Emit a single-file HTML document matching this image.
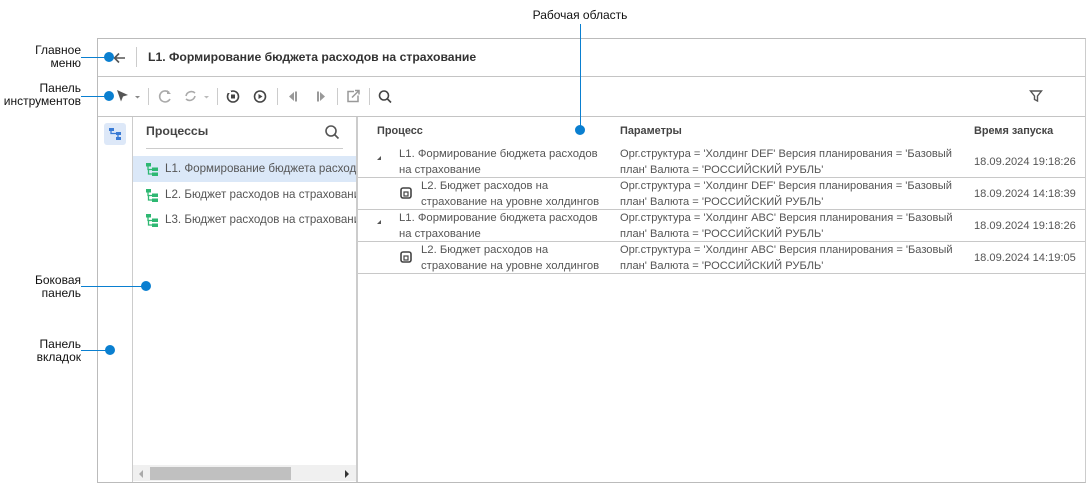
<!DOCTYPE html>
<html><head><meta charset="utf-8"><style>
*{margin:0;padding:0;box-sizing:border-box}
body{width:1092px;height:486px;background:#fff;font-family:"Liberation Sans",Arial,sans-serif;position:relative;overflow:hidden;color:#333}
.a{position:absolute}
.lbl{position:absolute;font-size:12px;color:#111;text-align:right;line-height:13px}
.dot{position:absolute;width:10px;height:10px;border-radius:5px;background:#0a7fd0}
.ln{position:absolute;background:#0a7fd0}
.t{position:absolute;font-size:11.3px;color:#555;line-height:16px;white-space:nowrap}
.h{position:absolute;font-size:10.9px;font-weight:bold;color:#444}
.row{position:absolute;left:358px;width:727px;height:1px;background:#c8c8c8}
.sep{position:absolute;top:88px;width:1px;height:17px;background:#ccc}
</style></head><body>
<div class="a" style="left:97px;top:38px;width:989px;height:445px;border:1px solid #bbb;border-right:1px solid #ccc"></div>
<div class="a" style="left:98px;top:76px;width:987px;height:1px;background:#c4c4c4"></div>
<div class="a" style="left:98px;top:116px;width:987px;height:1px;background:#c4c4c4"></div>
<div class="a" style="left:132px;top:117px;width:1px;height:365px;background:#ccc"></div>
<div class="a" style="left:356px;top:117px;width:2px;height:365px;background:#ccc"></div>
<div class="a" style="left:136px;top:47px;width:1px;height:20px;background:#ccc"></div>
<svg class="a" style="left:113px;top:51px" width="14" height="14" viewBox="0 0 14 14"><path d="M12 7H2M6 2.5L1.5 7 6 11.5" stroke="#555" stroke-width="1.6" fill="none"/></svg>
<div class="a" style="left:148px;top:50px;font-size:12.2px;font-weight:bold;color:#333">L1. Формирование бюджета расходов на страхование</div>
<svg class="a" style="left:114px;top:88px" width="290" height="17" viewBox="0 0 290 17">
<path d="M3 2l11 5-5 1.5-2 5z" fill="#555"/><path d="M21 8l2.5 2.5L26 8z" fill="#888"/>
<g stroke="#aaa" stroke-width="1.6" fill="none"><path d="M55 4.5A5.5 5.5 0 1 0 56 11"/><path d="M81 5a5.5 5.5 0 0 0-9 3M72 11a5.5 5.5 0 0 0 9-3"/></g>
<path d="M53 2v4h4z" fill="#aaa"/><path d="M90 8l2.5 2.5L95 8z" fill="#bbb"/>
<g stroke="#444" stroke-width="1.6" fill="none"><circle cx="119" cy="8.5" r="5.5"/><circle cx="146" cy="8.5" r="5.5"/></g>
<rect x="117" y="6.5" width="4" height="4" fill="#444"/><path d="M144.5 6v5l4-2.5z" fill="#444"/>
<path d="M114 3h3v2h-3z M140 3h-3v2h3z" fill="#fff"/>
<g fill="#999"><path d="M175 8.5l5-4.5v9z"/><rect x="181" y="3.5" width="2" height="10"/><rect x="203" y="3.5" width="2" height="10"/><path d="M206 4v9l5-4.5z"/></g>
<g stroke="#999" stroke-width="1.5" fill="none"><path d="M240 3.5h-6v10h10v-6"/><path d="M238 9.5l7-7M241 2.5h4v4"/></g>
<g stroke="#444" stroke-width="1.6" fill="none"><circle cx="270" cy="7.5" r="4.5"/><path d="M273.5 11l3.5 3.5"/></g>
</svg>
<div class="sep" style="left:148px"></div><div class="sep" style="left:217px"></div><div class="sep" style="left:277px"></div><div class="sep" style="left:337px"></div><div class="sep" style="left:369px"></div>
<svg class="a" style="left:1029px;top:89px" width="14" height="14" viewBox="0 0 14 14"><path d="M1.5 2h11l-4 5v5l-3-1.5V7z" stroke="#555" stroke-width="1.4" fill="none"/></svg>
<div class="a" style="left:104px;top:123px;width:22px;height:22px;background:#dde8f8;border-radius:3px"></div>
<svg class="a" style="left:108px;top:127px" width="14" height="14" viewBox="0 0 14 14"><g fill="#3a7bd5"><rect x="1" y="1" width="5" height="3"/><rect x="8" y="5" width="5" height="3"/><rect x="8" y="10" width="5" height="3"/></g><path d="M3 4v2.5h5M10 8v2" stroke="#3a7bd5" stroke-width="1.3" fill="none"/></svg>
<div class="a" style="left:146px;top:124px;font-size:12.3px;font-weight:bold;color:#444">Процессы</div>
<svg class="a" style="left:324px;top:124px" width="16" height="16" viewBox="0 0 16 16"><g stroke="#555" stroke-width="1.6" fill="none"><circle cx="7" cy="7" r="5"/><path d="M10.5 10.5l4 4"/></g></svg>
<div class="a" style="left:146px;top:148px;width:197px;height:1px;background:#ccc"></div>
<div class="a" style="left:133px;top:156px;width:223px;height:26px;background:#dbe8f8"></div>
<svg width="0" height="0" style="position:absolute"><defs><g id="pi"><g fill="#2eb872"><rect x="0" y="0" width="5" height="3.5"/><rect x="6" y="4.5" width="6" height="3.5"/><rect x="6" y="9.5" width="6" height="3.5"/></g><path d="M2 3.5v3h4M2.5 6.5v4.5h4" stroke="#2eb872" stroke-width="1.3" fill="none"/></g></defs></svg>
<svg class="a" style="left:146px;top:163px" width="13" height="13"><use href="#pi"/></svg>
<svg class="a" style="left:146px;top:189px" width="13" height="13"><use href="#pi"/></svg>
<svg class="a" style="left:146px;top:214px" width="13" height="13"><use href="#pi"/></svg>
<div class="a" style="left:133px;top:156px;width:223px;height:300px;overflow:hidden">
<div class="t" style="left:32px;top:5px;font-size:11.6px">L1. Формирование бюджета расходов</div>
<div class="t" style="left:32px;top:31px;font-size:11.6px">L2. Бюджет расходов на страхование</div>
<div class="t" style="left:32px;top:56px;font-size:11.6px">L3. Бюджет расходов на страхование</div>
</div>
<div class="a" style="left:133px;top:465px;width:223px;height:16px;background:#f0f0f0"></div>
<div class="a" style="left:150px;top:467px;width:141px;height:13px;background:#c0c0c0"></div>
<div class="a" style="left:139px;top:470px;width:0;height:0;border:4px solid transparent;border-right:4px solid #aaa;border-left:0"></div>
<div class="a" style="left:345px;top:470px;width:0;height:0;border:4px solid transparent;border-left:4px solid #333;border-right:0"></div>
<div class="h" style="left:377px;top:125px">Процесс</div>
<div class="h" style="left:620px;top:125px">Параметры</div>
<div class="h" style="left:974px;top:125px">Время запуска</div>
<div class="row" style="top:177px"></div><div class="row" style="top:209px"></div><div class="row" style="top:241px"></div><div class="row" style="top:273px"></div>
<div class="a" style="left:377px;top:156px;border-left:4px solid transparent;border-bottom:4px solid #555"></div>
<div class="a" style="left:377px;top:220px;border-left:4px solid transparent;border-bottom:4px solid #555"></div>
<svg class="a" style="left:400px;top:187px" width="12" height="12" viewBox="0 0 12 12"><rect x="1" y="1" width="10" height="10" rx="2" stroke="#444" stroke-width="1.6" fill="none"/><rect x="4" y="5" width="4" height="4" stroke="#444" stroke-width="1.2" fill="none"/></svg>
<svg class="a" style="left:400px;top:251px" width="12" height="12" viewBox="0 0 12 12"><rect x="1" y="1" width="10" height="10" rx="2" stroke="#444" stroke-width="1.6" fill="none"/><rect x="4" y="5" width="4" height="4" stroke="#444" stroke-width="1.2" fill="none"/></svg>
<div class="t" style="left:399px;top:146px">L1. Формирование бюджета расходов<br>на страхование</div>
<div class="t" style="left:421px;top:178px">L2. Бюджет расходов на<br>страхование на уровне холдингов</div>
<div class="t" style="left:399px;top:210px">L1. Формирование бюджета расходов<br>на страхование</div>
<div class="t" style="left:421px;top:242px">L2. Бюджет расходов на<br>страхование на уровне холдингов</div>
<div class="t" style="left:620px;top:146px;font-size:11.1px">Орг.структура = 'Холдинг DEF' Версия планирования = 'Базовый<br>план' Валюта = 'РОССИЙСКИЙ РУБЛЬ'</div>
<div class="t" style="left:620px;top:178px;font-size:11.1px">Орг.структура = 'Холдинг DEF' Версия планирования = 'Базовый<br>план' Валюта = 'РОССИЙСКИЙ РУБЛЬ'</div>
<div class="t" style="left:620px;top:210px;font-size:11.1px">Орг.структура = 'Холдинг ABC' Версия планирования = 'Базовый<br>план' Валюта = 'РОССИЙСКИЙ РУБЛЬ'</div>
<div class="t" style="left:620px;top:242px;font-size:11.1px">Орг.структура = 'Холдинг ABC' Версия планирования = 'Базовый<br>план' Валюта = 'РОССИЙСКИЙ РУБЛЬ'</div>
<div class="t" style="left:974px;top:154px;font-size:11.1px">18.09.2024 19:18:26</div>
<div class="t" style="left:974px;top:186px;font-size:11.1px">18.09.2024 14:18:39</div>
<div class="t" style="left:974px;top:218px;font-size:11.1px">18.09.2024 19:18:26</div>
<div class="t" style="left:974px;top:250px;font-size:11.1px">18.09.2024 14:19:05</div>
<div class="lbl" style="left:0;width:81px;top:44px">Главное<br>меню</div>
<div class="ln" style="left:81px;top:57px;width:28px;height:1px"></div><div class="dot" style="left:104px;top:52px"></div>
<div class="lbl" style="left:0;width:81px;top:82px">Панель<br>инструментов</div>
<div class="ln" style="left:81px;top:96px;width:28px;height:1px"></div><div class="dot" style="left:104px;top:91px"></div>
<div class="lbl" style="left:0;width:81px;top:274px">Боковая<br>панель</div>
<div class="ln" style="left:81px;top:286px;width:64px;height:1px"></div><div class="dot" style="left:141px;top:281px"></div>
<div class="lbl" style="left:0;width:81px;top:338px">Панель<br>вкладок</div>
<div class="ln" style="left:81px;top:350px;width:28px;height:1px"></div><div class="dot" style="left:105px;top:345px"></div>
<div class="lbl" style="left:520px;width:120px;top:9px;text-align:center">Рабочая область</div>
<div class="ln" style="left:580px;top:24px;width:1px;height:105px"></div><div class="dot" style="left:575px;top:125px"></div>
</body></html>
